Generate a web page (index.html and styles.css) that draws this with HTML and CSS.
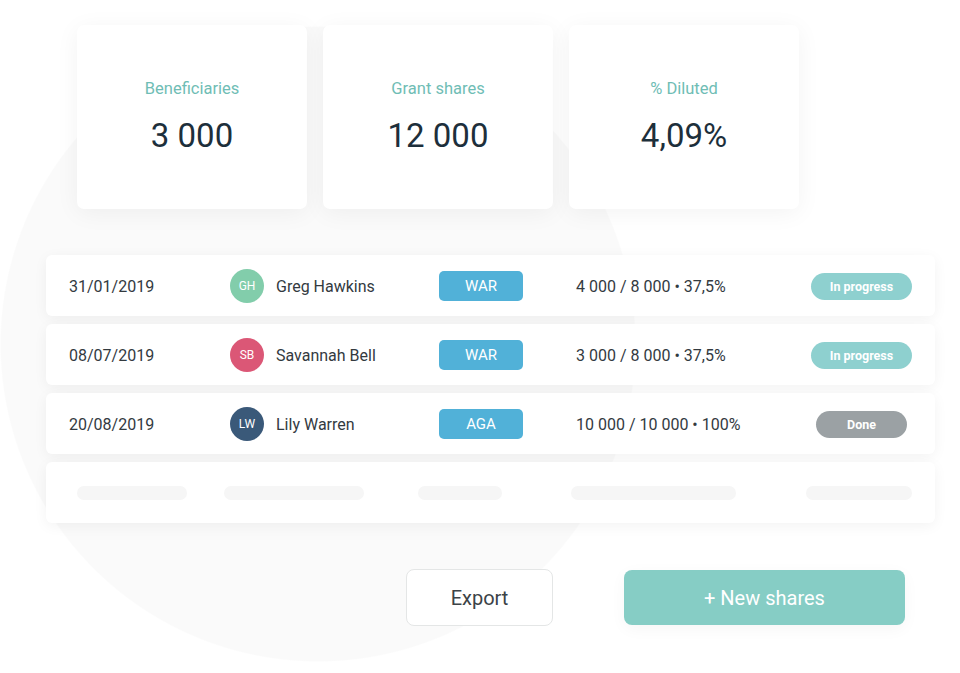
FILE: index.html
```html
<!DOCTYPE html>
<html>
<head>
<meta charset="utf-8">
<link rel="stylesheet" href="styles.css">
</head>
<body>
<div class="page">
  <section class="stats">
    <div class="stat">
      <div class="stat-label">Beneficiaries</div>
      <div class="stat-value">3 000</div>
    </div>
    <div class="stat">
      <div class="stat-label">Grant shares</div>
      <div class="stat-value">12 000</div>
    </div>
    <div class="stat">
      <div class="stat-label">% Diluted</div>
      <div class="stat-value">4,09%</div>
    </div>
  </section>

  <section class="rows">
    <div class="row">
      <div class="date">31/01/2019</div>
      <div class="person"><span class="avatar av-green">GH</span><span class="name">Greg Hawkins</span></div>
      <div class="badge">WAR</div>
      <div class="shares">4 000 / 8 000 • 37,5%</div>
      <div class="status"><span class="pill pill-progress">In progress</span></div>
    </div>
    <div class="row">
      <div class="date">08/07/2019</div>
      <div class="person"><span class="avatar av-red">SB</span><span class="name">Savannah Bell</span></div>
      <div class="badge">WAR</div>
      <div class="shares">3 000 / 8 000 • 37,5%</div>
      <div class="status"><span class="pill pill-progress">In progress</span></div>
    </div>
    <div class="row">
      <div class="date">20/08/2019</div>
      <div class="person"><span class="avatar av-navy">LW</span><span class="name">Lily Warren</span></div>
      <div class="badge">AGA</div>
      <div class="shares">10 000 / 10 000 • 100%</div>
      <div class="status"><span class="pill pill-done">Done</span></div>
    </div>
    <div class="row row-skeleton">
      <span class="sk sk-1"></span>
      <span class="sk sk-2"></span>
      <span class="sk sk-3"></span>
      <span class="sk sk-4"></span>
      <span class="sk sk-5"></span>
    </div>
  </section>

  <section class="actions">
    <button class="btn btn-export">Export</button>
    <button class="btn btn-primary">+ New shares</button>
  </section>
</div>
</body>
</html>
```

FILE: styles.css
```css
* { box-sizing: border-box; }

html, body {
  margin: 0;
  padding: 0;
}

body {
  width: 960px;
  height: 673px;
  overflow: hidden;
  font-family: Roboto, "Liberation Sans", sans-serif;
  background: radial-gradient(circle 318px at 318px 344px, #fafafa 99.6%, #ffffff 100%);
}

.page {
  padding: 25px 25px 0 46px;
}

/* Stat cards */
.stats {
  display: flex;
  gap: 16px;
  margin-left: 31px;
}

.stat {
  width: 230px;
  height: 184px;
  background: #fff;
  border-radius: 7px;
  box-shadow: 0 4px 24px rgba(0, 0, 0, 0.05);
  display: flex;
  flex-direction: column;
  align-items: center;
  padding-top: 54px;
}

.stat-label {
  font-size: 16.5px;
  color: #6fbdb5;
  line-height: 20px;
}

.stat-value {
  font-size: 33px;
  color: #1d2f3b;
  line-height: 40px;
  margin-top: 17px;
}

/* Rows */
.rows {
  margin-top: 46px;
  width: 889px;
  display: flex;
  flex-direction: column;
  gap: 8px;
}

.row {
  height: 61px;
  background: #fff;
  border-radius: 6px;
  box-shadow: 0 3px 14px rgba(0, 0, 0, 0.05);
  display: grid;
  grid-template-columns: 161px 209px 84px 53px 220px 131px;
  align-items: center;
  padding-left: 23px;
  padding-top: 1px;
  font-size: 16px;
  color: #333a3f;
}

.person {
  display: flex;
  align-items: center;
  gap: 12px;
}

.avatar {
  width: 34px;
  height: 34px;
  border-radius: 50%;
  display: flex;
  align-items: center;
  justify-content: center;
  color: #fff;
  font-size: 12px;
  opacity: 0.92;
}

.av-green { background: #78c9a4; }
.av-red { background: #d9496b; }
.av-navy { background: #2a4b6e; }

.badge {
  height: 30px;
  border-radius: 5px;
  background: #51b1d8;
  color: #fff;
  font-size: 15px;
  display: flex;
  align-items: center;
  justify-content: center;
}

.shares {
  grid-column: 5;
}

.status {
  grid-column: 6;
  display: flex;
  justify-content: center;
}

.pill {
  height: 27px;
  border-radius: 14px;
  color: #fff;
  font-size: 12.5px;
  font-weight: 700;
  display: flex;
  align-items: center;
  justify-content: center;
}

.pill-progress {
  width: 101px;
  background: #8ed0cf;
}

.pill-done {
  width: 91px;
  background: #9ba1a4;
}

/* skeleton row */
.row-skeleton {
  display: flex;
  padding-left: 31px;
}

.sk {
  height: 14px;
  border-radius: 7px;
  background: #f6f6f6;
}

.sk-1 { width: 110px; }
.sk-2 { width: 140px; margin-left: 37px; }
.sk-3 { width: 84px; margin-left: 54px; }
.sk-4 { width: 165px; margin-left: 69px; }
.sk-5 { width: 106px; margin-left: 70px; }

/* Actions */
.actions {
  width: 889px;
  margin-top: 46px;
  display: flex;
  justify-content: flex-end;
  align-items: center;
  gap: 71px;
  padding-right: 30px;
}

.btn {
  font-family: Roboto, "Liberation Sans", sans-serif;
  font-size: 20px;
  border-radius: 8px;
  cursor: pointer;
}

.btn-export {
  width: 147px;
  height: 57px;
  background: #fff;
  border: 1px solid #e4e6e6;
  color: #3c4347;
}

.btn-primary {
  width: 281px;
  height: 55px;
  background: #86cdc5;
  border: none;
  color: #fff;
  box-shadow: 0 4px 16px rgba(0, 0, 0, 0.04);
}
```
